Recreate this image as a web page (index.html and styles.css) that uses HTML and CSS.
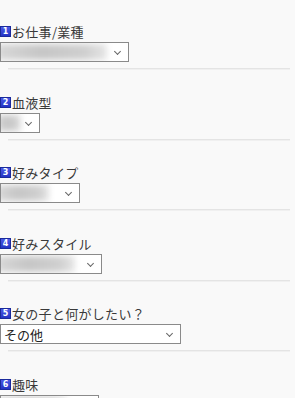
FILE: index.html
```html
<!DOCTYPE html>
<html lang="ja">
<head>
<meta charset="utf-8">
<link rel="stylesheet" href="styles.css">
</head>
<body>
<div class="form">
  <div class="item">
    <div class="label"><span class="num">1</span>お仕事/業種</div>
    <div class="sel w1"><span class="blur b1"></span><span class="chev"></span></div>
    <div class="rule"></div>
  </div>
  <div class="item">
    <div class="label"><span class="num">2</span>血液型</div>
    <div class="sel w2"><span class="blur b2"></span><span class="chev"></span></div>
    <div class="rule"></div>
  </div>
  <div class="item">
    <div class="label"><span class="num">3</span>好みタイプ</div>
    <div class="sel w3"><span class="blur b3"></span><span class="chev"></span></div>
    <div class="rule"></div>
  </div>
  <div class="item">
    <div class="label"><span class="num">4</span>好みスタイル</div>
    <div class="sel w4"><span class="blur b4"></span><span class="chev"></span></div>
    <div class="rule"></div>
  </div>
  <div class="item">
    <div class="label"><span class="num">5</span>女の子と何がしたい？</div>
    <div class="sel w5"><span class="val">その他</span><span class="chev"></span></div>
    <div class="rule"></div>
  </div>
  <div class="item">
    <div class="label"><span class="num">6</span>趣味</div>
    <div class="sel w6"><span class="blur b6"></span><span class="chev"></span></div>
  </div>
</div>
</body>
</html>
```
FILE: styles.css
```css
html, body {
  margin: 0;
  padding: 0;
  background: #f9f9f9;
}
body {
  font-family: "Noto Sans CJK JP", "Noto Sans", sans-serif;
  color: #3a3a3a;
  font-size: 13px;
  overflow: hidden;
}
.item {
  padding-top: 23px;
}
.item:nth-child(even) {
  padding-top: 24px;
}
.label {
  display: flex;
  align-items: center;
  height: 17px;
  line-height: 17px;
  margin-bottom: 2px;
  letter-spacing: 0.3px;
}
.num {
  display: inline-flex;
  align-items: center;
  justify-content: center;
  box-sizing: border-box;
  width: 11px;
  height: 11px;
  margin-right: 1px;
  background: linear-gradient(#4a5ae6, #2333c4);
  border: 1px solid #1a2a9c;
  color: #fff;
  font-family: "DejaVu Sans", sans-serif;
  font-weight: bold;
  font-size: 8px;
  line-height: 9px;
  letter-spacing: 0;
}
.sel {
  position: relative;
  box-sizing: border-box;
  height: 20px;
  background: #fff;
  border: 1px solid #8a8a8a;
  display: flex;
  align-items: center;
  overflow: hidden;
}
.w1 { width: 129px; }
.w2 { width: 40px; }
.w3 { width: 80px; }
.w4 { width: 102px; }
.w5 { width: 181px; }
.w6 { width: 99px; }
.blur {
  display: block;
  height: 16px;
  margin-left: -4px;
  background: linear-gradient(90deg, #d8d8d8, #c6c6c6 40%, #cfcfcf 80%, #e6e6e6);
  filter: blur(3px);
}
.b1 { width: 110px; }
.b2 { width: 24px; }
.b3 { width: 52px; }
.b4 { width: 78px; }
.b6 { width: 70px; }
.val {
  padding-left: 3px;
  color: #222;
  font-size: 13px;
}
.chev {
  position: absolute;
  right: 8px;
  top: 6px;
  width: 4px;
  height: 4px;
  border-right: 1px solid #666;
  border-bottom: 1px solid #666;
  transform: rotate(45deg);
}
.rule {
  box-sizing: border-box;
  margin: 6px 5px 0 8px;
  height: 2px;
  background: #e4e4e4;
  border-bottom: 1px solid #f0f0f0;
}
```
